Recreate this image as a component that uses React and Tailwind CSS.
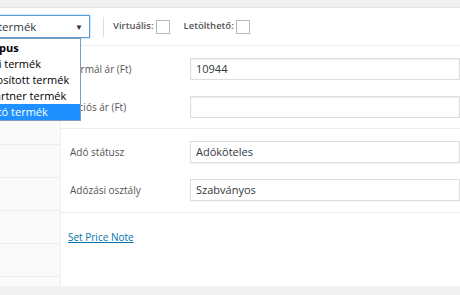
export default function App() {
  const font = { fontFamily: '"Open Sans", "Noto Sans", sans-serif' };
  return (
    <div className="w-[460px] h-[295px] bg-[#f1f1f1] overflow-hidden pt-[7px]" style={font}>
      <div className="w-[460px] h-[279px] bg-white border-t border-[#e5e5e5] flex flex-col">
        {/* header row */}
        <div className="h-[38px] shrink-0 flex items-center border-b border-[#eeeeee] relative">
          <div className="relative ml-[-10px] w-[100px] h-[23px] border border-[#5b9dd9] bg-white flex items-center shadow-[0_0_2px_rgba(30,140,190,0.6)]">
            <span className="pl-[7px] text-[11.5px] text-[#32373c] leading-none">termék</span>
            <span className="ml-auto mr-[6px] text-[8px] text-[#333]">▼</span>
            <div className="absolute left-[-47px] top-[22px] w-[137px] h-[83px] bg-white border border-[#7f9db9] z-10 pt-[1px]">
              <div className="h-[16px] pl-[4px] text-[11px] leading-[16px] font-bold text-black whitespace-nowrap">Terméktípus</div>
              <div className="h-[16px] pl-[11px] text-[11px] leading-[16px] text-black whitespace-nowrap">Egyszerű termék</div>
              <div className="h-[16px] pl-[11px] text-[11px] leading-[16px] text-black whitespace-nowrap">Csoportosított termék</div>
              <div className="h-[16px] pl-[11px] text-[11px] leading-[16px] text-black whitespace-nowrap">Külső/Partner termék</div>
              <div className="h-[16px] pl-[11px] text-[11px] leading-[16px] text-white bg-[#1e90ff] whitespace-nowrap">Variálható termék</div>
            </div>
          </div>
          <div className="ml-[13px] w-px h-[20px] bg-[#dddddd]"></div>
          <span className="ml-[9px] text-[9.5px] font-semibold text-[#555]">Virtuális:</span>
          <span className="ml-[2px] w-[14px] h-[14px] border border-[#b4b9be] bg-white"></span>
          <span className="ml-[14px] text-[9.5px] font-semibold text-[#555]">Letölthető:</span>
          <span className="ml-[2px] w-[14px] h-[14px] border border-[#b4b9be] bg-white"></span>
        </div>
        {/* body */}
        <div className="flex flex-1">
          <div className="w-[61px] shrink-0 bg-[#fafafa] border-r border-[#eeeeee] flex flex-col">
            {[0, 1, 2, 3, 4, 5, 6].map((i) => (
              <div key={i} className="h-[33px] shrink-0 border-b border-[#eeeeee]"></div>
            ))}
          </div>
          <div className="flex-1 flex flex-col">
            <div className="pt-[12px] pb-[10px] border-b border-[#eeeeee] flex flex-col gap-[16px]">
              <div className="flex items-center">
                <span className="w-[129px] shrink-0 pl-[6px] text-[10px] text-[#555]">Normál ár (Ft)</span>
                <div className="flex-1 h-[22px] border border-[#dddddd] shadow-[inset_0_1px_2px_rgba(0,0,0,0.07)] flex items-center pl-[5px] text-[11px] text-[#32373c]">10944</div>
              </div>
              <div className="flex items-center">
                <span className="w-[129px] shrink-0 pl-[6px] text-[10px] text-[#555]">Akciós ár (Ft)</span>
                <div className="flex-1 h-[22px] border border-[#dddddd] shadow-[inset_0_1px_2px_rgba(0,0,0,0.07)]"></div>
              </div>
            </div>
            <div className="pt-[12px] pb-[11px] border-b border-[#eeeeee] flex flex-col gap-[16px]">
              <div className="flex items-center">
                <span className="w-[129px] shrink-0 pl-[9px] text-[10px] text-[#555]">Adó státusz</span>
                <div className="flex-1 h-[22px] border border-[#dddddd] shadow-[0_1px_1px_rgba(0,0,0,0.04)] flex items-center pl-[5px] text-[11px] text-[#32373c]">Adóköteles</div>
              </div>
              <div className="flex items-center">
                <span className="w-[129px] shrink-0 pl-[9px] text-[10px] text-[#555]">Adózási osztály</span>
                <div className="flex-1 h-[22px] border border-[#dddddd] shadow-[0_1px_1px_rgba(0,0,0,0.04)] flex items-center pl-[5px] text-[11px] text-[#32373c]">Szabványos</div>
              </div>
            </div>
            <div className="pt-[10px] pl-[7px]">
              <a className="text-[10px] text-[#0073aa] underline">Set Price Note</a>
            </div>
          </div>
        </div>
      </div>
    </div>
  );
}
